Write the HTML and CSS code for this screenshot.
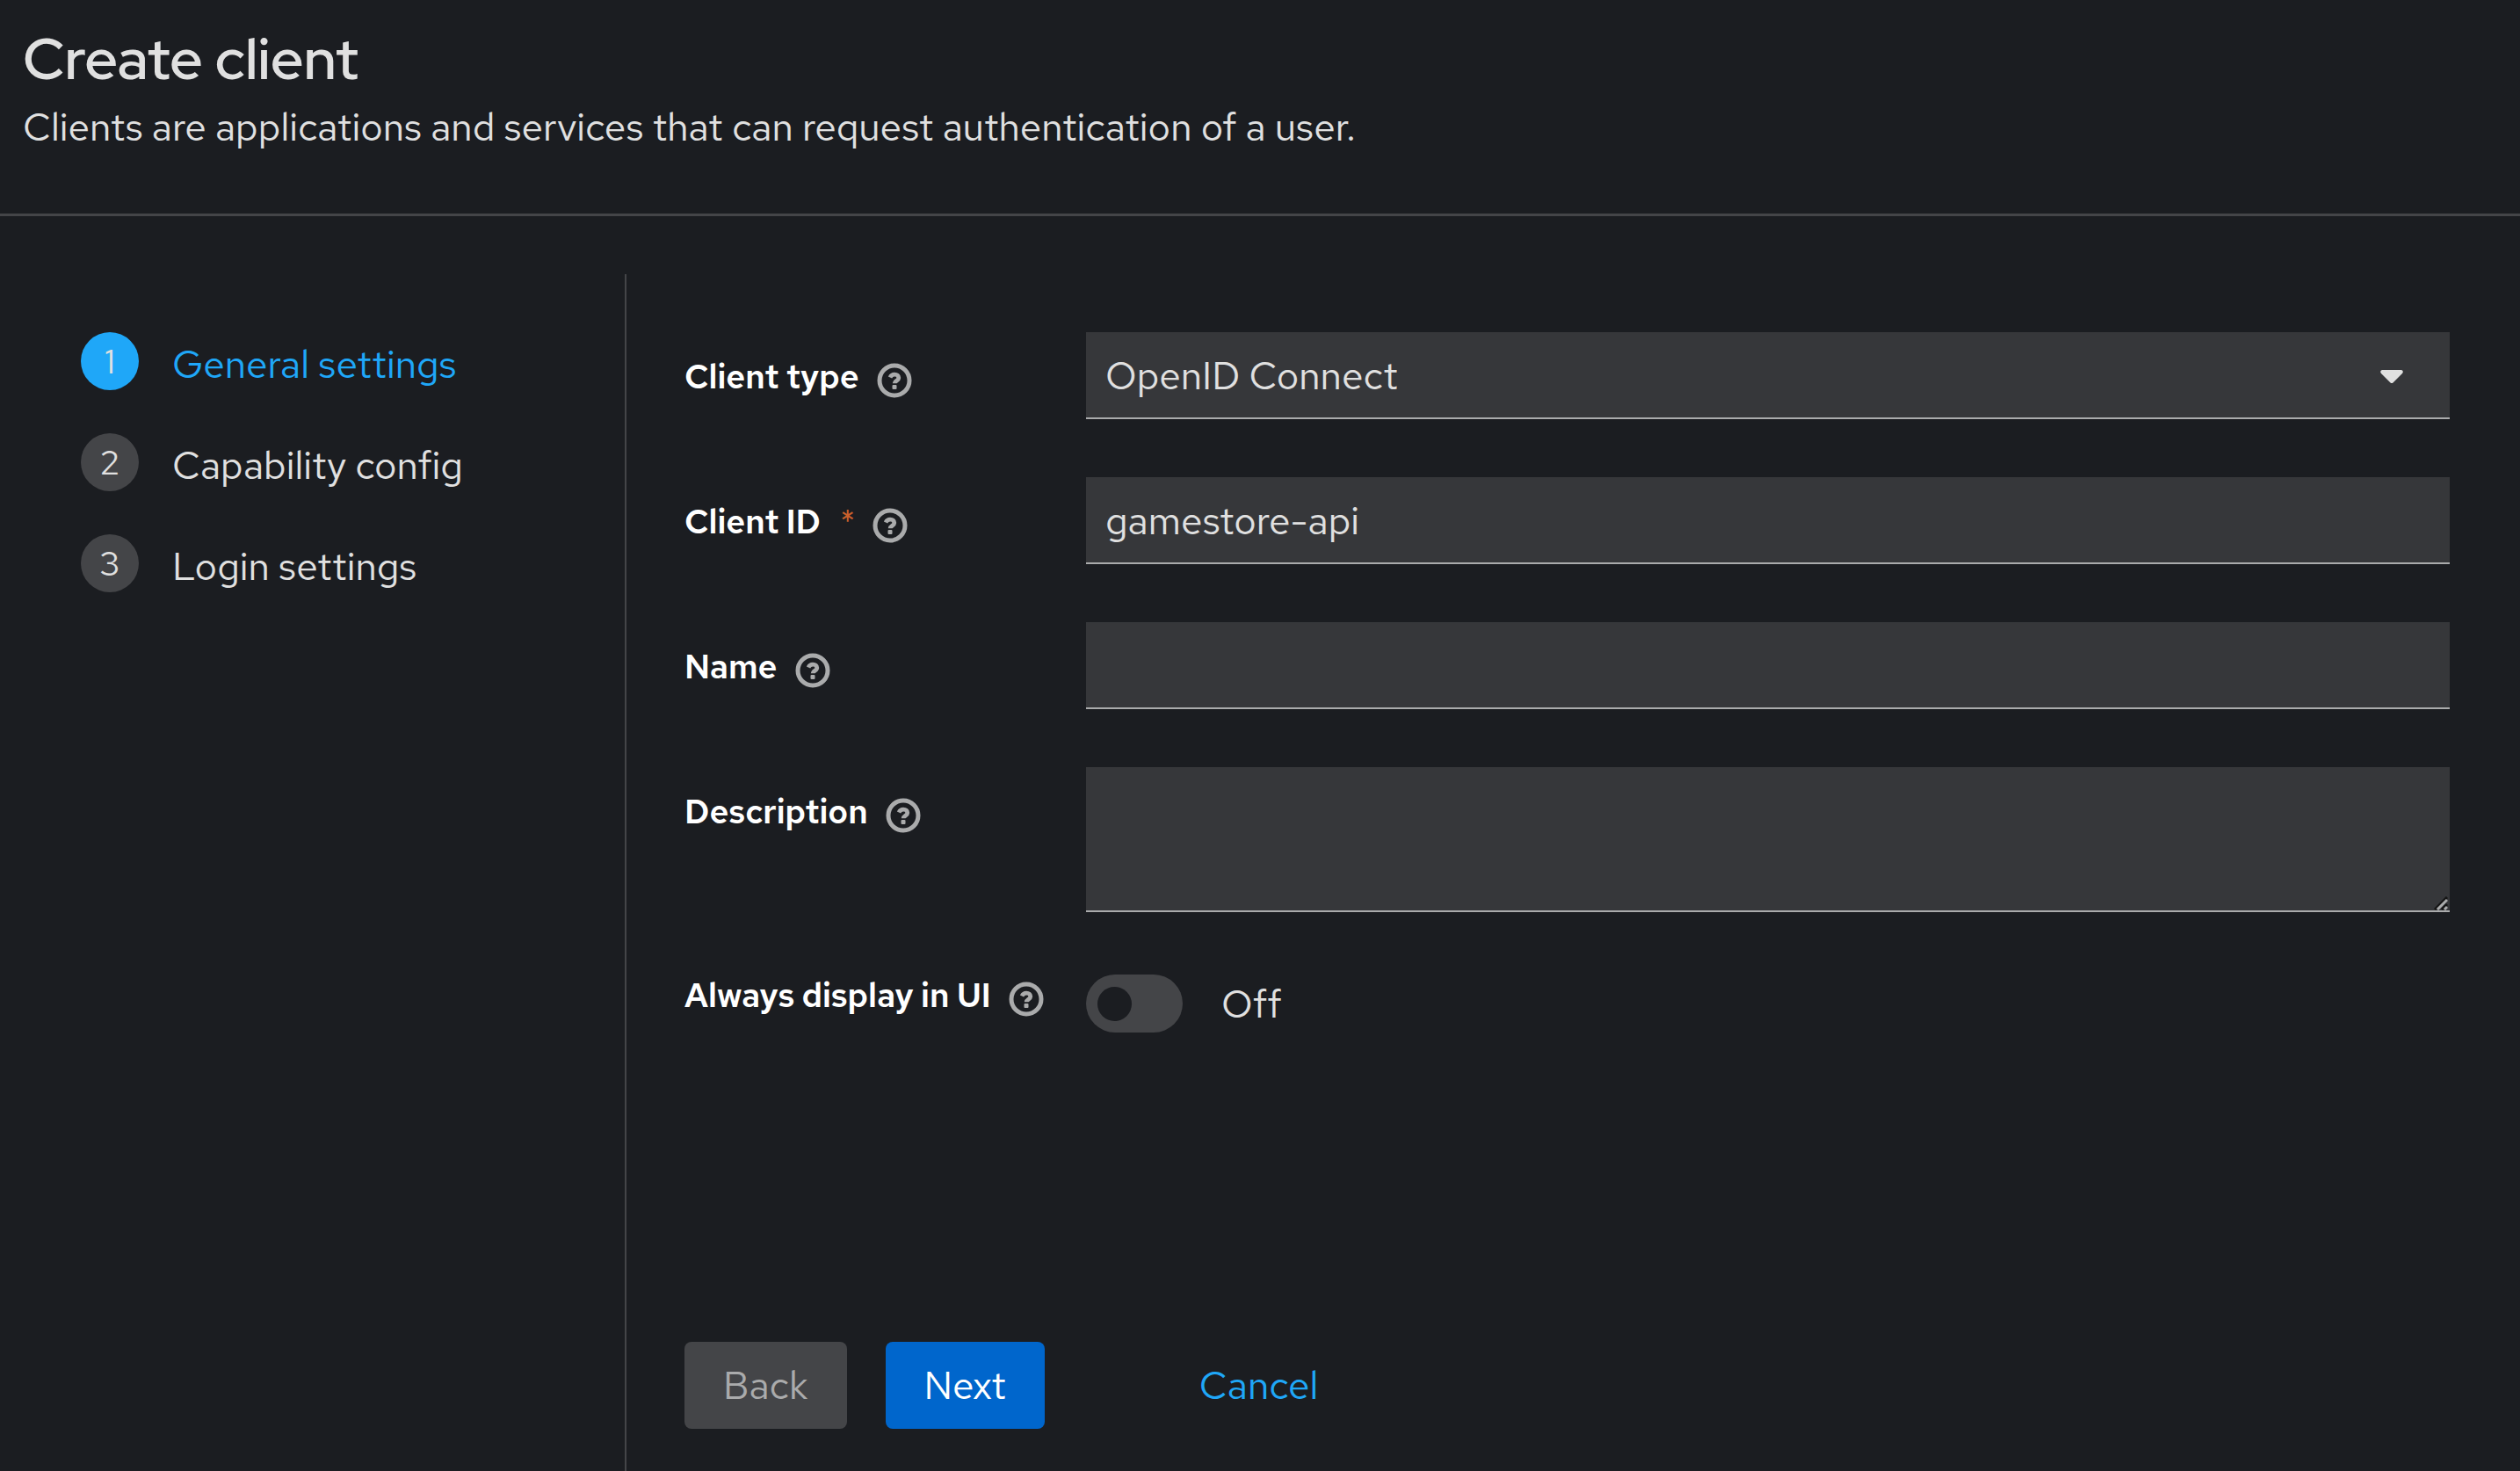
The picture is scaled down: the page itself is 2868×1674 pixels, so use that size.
FILE: index.html
```html
<!DOCTYPE html>
<html lang="en">
<head>
<meta charset="utf-8">
<meta name="viewport" content="width=device-width, initial-scale=1">
<title>Create client</title>
<link rel="stylesheet" href="styles.css">
</head>
<body>
<svg class="sprite" aria-hidden="true">
  <symbol id="help" viewBox="0 0 40 40">
    <circle cx="20" cy="20" r="17" fill="none" stroke="currentColor" stroke-width="5"/>
    <path d="M15 16.500c1.100-2.200 2.800-3.300 5.100-3.300 2.700 0 4.700 1.500 4.700 3.800 0 3.200-4.600 3.300-4.600 6.300" fill="none" stroke="currentColor" stroke-width="4.800"/>
    <rect x="17.500" y="25" width="5" height="5" rx="1" fill="currentColor"/>
  </symbol>
</svg>
<header class="page-header">
  <h1 class="title">Create client</h1>
  <p class="subtitle">Clients are applications and services that can request authentication of a user.</p>
</header>
<div class="wizard">
  <nav class="steps" aria-label="Steps">
    <ol class="step-list">
      <li><button type="button" class="step current" aria-current="step"><span class="step-number">1</span><span class="step-name">General settings</span></button></li>
      <li><button type="button" class="step"><span class="step-number">2</span><span class="step-name">Capability config</span></button></li>
      <li><button type="button" class="step"><span class="step-number">3</span><span class="step-name">Login settings</span></button></li>
    </ol>
  </nav>
  <main class="main">
    <form class="form">
      <div class="field">
        <div class="field-label"><label for="type">Client type</label><button type="button" class="help" aria-label="Help for client type"><svg><use href="#help"/></svg></button></div>
        <div class="select-wrap">
          <select id="type" class="control"><option>OpenID Connect</option><option>SAML</option></select>
          <svg class="caret" viewBox="0 0 26 16" aria-hidden="true"><path d="M2 0h22q3 1 1 4L14.500 14.500q-1.500 1-3 0L1 4Q-1 1 2 0Z" fill="currentColor"/></svg>
        </div>
      </div>
      <div class="field">
        <div class="field-label"><label for="client-id">Client ID<span class="required" aria-hidden="true">*</span></label><button type="button" class="help" aria-label="Help for client ID"><svg><use href="#help"/></svg></button></div>
        <input id="client-id" class="control" type="text" value="gamestore-api" required>
      </div>
      <div class="field">
        <div class="field-label"><label for="name">Name</label><button type="button" class="help" aria-label="Help for name"><svg><use href="#help"/></svg></button></div>
        <input id="name" class="control" type="text">
      </div>
      <div class="field">
        <div class="field-label"><label for="description">Description</label><button type="button" class="help" aria-label="Help for description"><svg><use href="#help"/></svg></button></div>
        <div class="area-wrap">
          <textarea id="description" class="control area"></textarea>
          <svg class="grip" viewBox="0 0 16 16" aria-hidden="true"><path d="M1 15 15 1M9 15l6-6" stroke="#151515" stroke-width="3"/><path d="M4 15 15 4M12 15l3-3" stroke="#aaabac" stroke-width="3"/></svg>
        </div>
      </div>
      <div class="field field-switch">
        <div class="field-label"><label for="always">Always display in UI</label><button type="button" class="help" aria-label="Help for always display in UI"><svg><use href="#help"/></svg></button></div>
        <div class="switch-row"><input id="always" class="switch" type="checkbox" role="switch"><span>Off</span></div>
      </div>
    </form>
    <footer class="actions">
      <button type="button" class="button back" disabled>Back</button>
      <button type="button" class="button next">Next</button>
      <button type="button" class="button cancel">Cancel</button>
    </footer>
  </main>
</div>
</body>
</html>
```
FILE: styles.css
```css
* { box-sizing: border-box; }
body {
  display: flex;
  flex-direction: column;
  min-height: 100vh;
  margin: 0;
  background: #1b1d21;
  color: #e0e0e0;
  font: 400 44px/66px "Red Hat Text", Inter, sans-serif;
}
button, input, select, textarea { font: inherit; color: inherit; }
button { padding: 0; border: 0; background: none; cursor: pointer; }
.sprite { display: none; }
.page-header {
  padding: 24px 26px 66px;
  border-bottom: 3px solid #444548;
}
.title { margin: 0 0 2px; font: 600 66px/85px "Red Hat Display", "Red Hat Text", Inter, sans-serif; }
.subtitle { margin: 0; }
.wizard { display: flex; flex: 1; padding-top: 66px; }
.steps { flex: 0 0 713px; padding: 66px 66px 66px 92px; border-right: 2px solid #444548; }
.step-list { display: flex; flex-direction: column; gap: 46px; margin: 0; padding: 0; list-style: none; }
.step { display: flex; gap: 38px; height: 69px; text-align: left; }
.step-number {
  width: 66px;
  height: 66px;
  border-radius: 50%;
  background: #444548;
  font-size: 39px;
  text-align: center;
}
.step-name { padding-top: 3px; }
.current { color: #1fa7f8; }
.current .step-number { background: #1fa7f8; color: #e0e0e0; }
.main { display: flex; flex: 1; flex-direction: column; min-width: 0; }
.form { display: flex; flex: 1; flex-direction: column; gap: 66px; padding: 66px 80px 66px 66px; }
.field { display: grid; grid-template-columns: 457px minmax(0, 1fr); align-items: start; }
.field-label {
  display: flex;
  align-items: center;
  gap: 20px;
  padding-top: 18px;
  color: #fff;
  font-size: 38px;
  font-weight: 600;
  line-height: 66px;
}
.required { margin-left: 22px; color: #c9602c; font-weight: 400; }
.help { display: flex; padding-top: 8px; color: #aaabac; }
.help svg { width: 40px; height: 40px; }
.control {
  display: block;
  width: 100%;
  height: 99px;
  padding: 0 22px;
  border: 0;
  border-bottom: 2px solid #aaabac;
  border-radius: 0;
  background: #36373a;
  appearance: none;
}
.select-wrap, .area-wrap { position: relative; }
.caret { position: absolute; right: 53px; top: 43px; width: 26px; height: 16px; pointer-events: none; }
.area { height: 165px; padding: 16px 22px; resize: none; }
.grip { position: absolute; right: 2px; bottom: 2px; width: 16px; height: 16px; pointer-events: none; }
.field-switch .field-label { padding-top: 0; margin-top: -4px; }
.switch-row { display: flex; align-items: center; gap: 44px; padding-top: 5px; }
.switch {
  display: flex;
  align-items: center;
  width: 110px;
  height: 66px;
  margin: 0;
  padding: 0 13px;
  border-radius: 33px;
  background: #444548;
  appearance: none;
}
.switch::before { content: ""; width: 39px; height: 39px; border-radius: 50%; background: #1b1d21; }
.switch:checked { justify-content: flex-end; background: #1fa7f8; }
.actions { display: flex; gap: 44px; padding: 0 66px 48px; }
.button { padding: 0 44px; border-radius: 8px; line-height: 99px; }
.back { background: #444548; color: #aaabac; }
.next { background: #0066cc; color: #fff; }
.cancel { margin-left: 88px; color: #1fa7f8; }
```
